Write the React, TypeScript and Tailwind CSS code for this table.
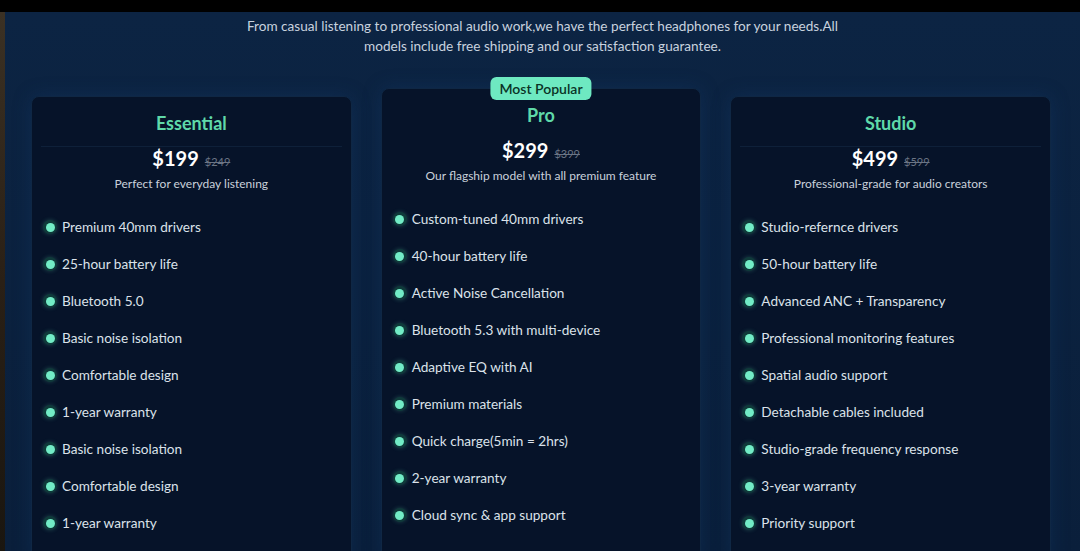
const plans = [
  {
    name: 'Essential',
    price: '$199',
    oldPrice: '$249',
    tagline: 'Perfect for everyday listening',
    features: [
      'Premium 40mm drivers',
      '25-hour battery life',
      'Bluetooth 5.0',
      'Basic noise isolation',
      'Comfortable design',
      '1-year warranty',
      'Basic noise isolation',
      'Comfortable design',
      '1-year warranty',
    ],
  },
  {
    name: 'Pro',
    price: '$299',
    oldPrice: '$399',
    tagline: 'Our flagship model with all premium feature',
    popular: true,
    features: [
      'Custom-tuned 40mm drivers',
      '40-hour battery life',
      'Active Noise Cancellation',
      'Bluetooth 5.3 with multi-device',
      'Adaptive EQ with AI',
      'Premium materials',
      'Quick charge(5min = 2hrs)',
      '2-year warranty',
      'Cloud sync & app support',
    ],
  },
  {
    name: 'Studio',
    price: '$499',
    oldPrice: '$599',
    tagline: 'Professional-grade for audio creators',
    features: [
      'Studio-refernce drivers',
      '50-hour battery life',
      'Advanced ANC + Transparency',
      'Professional monitoring features',
      'Spatial audio support',
      'Detachable cables included',
      'Studio-grade frequency response',
      '3-year warranty',
      'Priority support',
    ],
  },
];

type Plan = (typeof plans)[number] & { popular?: boolean };

function PlanCard({ plan }: { plan: Plan }) {
  return (
    <div
      className={
        'relative flex flex-col rounded-lg border border-[#0f2744] bg-[#061329] px-[9px] pb-[30px] shadow-[0_0_18px_rgba(20,60,110,0.35)] ' +
        (plan.popular ? 'mt-0' : 'mt-[8px]')
      }
    >
      {plan.popular && (
        <div className="absolute left-1/2 top-[-12px] -translate-x-1/2 rounded-md bg-[#6ee9c1] px-[9px] py-[2px] text-[14px] font-semibold leading-[19px] text-[#0a3326]">
          Most Popular
        </div>
      )}
      <div className="flex h-[49px] justify-center pt-[15px] text-[18px] font-bold leading-[22px] text-[#5fd9a9]">
        {plan.name}
      </div>
      <div className={'h-px ' + (plan.popular ? 'bg-transparent' : 'bg-[#0e2039]')} />
      <div className="flex items-baseline justify-center gap-[6px] leading-[23px]">
        <span className="text-[20px] font-bold text-white">{plan.price}</span>
        <span className="text-[11px] text-[#6b7585] line-through">{plan.oldPrice}</span>
      </div>
      <div className="text-center text-[12px] leading-[22px] text-[#c9d1db]">{plan.tagline}</div>
      <ul className="mt-[23px] flex flex-col gap-[19px] pl-[2px]">
        {plan.features.map((f, i) => (
          <li key={i} className="flex items-center gap-[5px] text-[13.6px] leading-[18px] text-[#dbe2ea]">
            <span className="flex h-[14px] w-[14px] items-center justify-center rounded-full bg-[#0f3a3a] shadow-[0_0_4px_rgba(110,233,193,0.25)]">
              <span className="h-[9px] w-[9px] rounded-full bg-[#72ecc6]" />
            </span>
            {f}
          </li>
        ))}
      </ul>
    </div>
  );
}

export default function App() {
  return (
    <div
      className="flex h-[551px] w-[1080px] flex-col overflow-hidden bg-black"
      style={{ fontFamily: 'Lato, "Noto Sans", sans-serif' }}
    >
      <div className="h-[12px] shrink-0 bg-black" />
      <div className="flex flex-1 overflow-hidden">
        <div className="w-[5px] shrink-0 bg-gradient-to-b from-[#3b3124] via-[#2a2016] to-[#1a1610]" />
        <div className="flex flex-1 flex-col bg-[#0b213f] bg-gradient-to-b from-[#0c2443] to-[#0a1f3b]">
          <p className="mx-auto mt-[4px] w-[600px] text-center text-[13.6px] leading-[20px] text-[#c8d2df]">
            From casual listening to professional audio work,we have the perfect headphones for your needs.All
            models include free shipping and our satisfaction guarantee.
          </p>
          <div className="ml-[26px] mt-[32px] grid w-[1020px] grid-cols-3 gap-[29px]">
            {plans.map((p) => (
              <PlanCard key={p.name} plan={p as Plan} />
            ))}
          </div>
        </div>
      </div>
    </div>
  );
}
